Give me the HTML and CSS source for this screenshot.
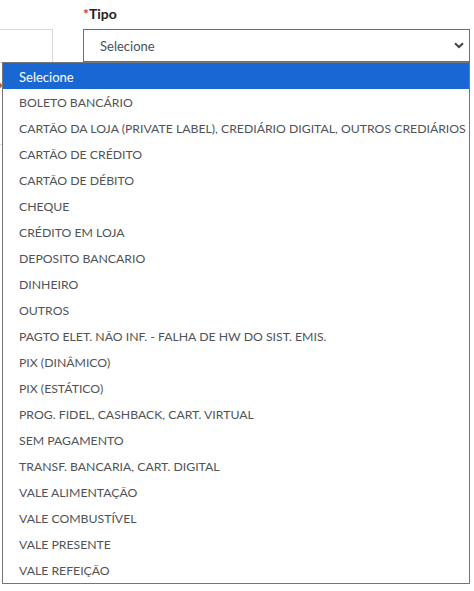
FILE: index.html
```html
<!DOCTYPE html>
<html>
<head>
  <meta http-equiv="Content-type" content="text/html; charset=utf-8">
  <title>Tipo</title>
<link rel="stylesheet" href="styles.css">
</head>

<body>
  <div class="form-row">
    <div class="field field-left">
      <div class="input-box"></div>
    </div>
    <div class="field field-tipo">
      <label class="label"><span class="req">*</span>Tipo</label>
      <div class="select-box">
        <span>Selecione</span>
        <svg class="chevron" width="10" height="7" viewBox="0 0 10 7">
          <path d="M1 1.2 L5 5 L9 1.2" fill="none" stroke="#444" stroke-width="2"/>
        </svg>
      </div>
    </div>
  </div>
  <div class="side-mark"></div>
  <div class="side-line"></div>

  <ul class="listbox">
    <li class="selected">Selecione</li>
    <li>BOLETO BANCÁRIO</li>
    <li>CARTÃO DA LOJA (PRIVATE LABEL), CREDIÁRIO DIGITAL, OUTROS CREDIÁRIOS</li>
    <li>CARTÃO DE CRÉDITO</li>
    <li>CARTÃO DE DÉBITO</li>
    <li>CHEQUE</li>
    <li>CRÉDITO EM LOJA</li>
    <li>DEPOSITO BANCARIO</li>
    <li>DINHEIRO</li>
    <li>OUTROS</li>
    <li>PAGTO ELET. NÃO INF. - FALHA DE HW DO SIST. EMIS.</li>
    <li>PIX (DINÂMICO)</li>
    <li>PIX (ESTÁTICO)</li>
    <li>PROG. FIDEL, CASHBACK, CART. VIRTUAL</li>
    <li>SEM PAGAMENTO</li>
    <li>TRANSF. BANCARIA, CART. DIGITAL</li>
    <li>VALE ALIMENTAÇÃO</li>
    <li>VALE COMBUSTÍVEL</li>
    <li>VALE PRESENTE</li>
    <li>VALE REFEIÇÃO</li>
  </ul>
</body>
</html>
```

FILE: styles.css
```css
body {
  margin: 0;
  background: #fff;
  font-family: Lato, "Liberation Sans", sans-serif;
  color: #495057;
  position: relative;
  height: 591px;
  overflow: hidden;
}

.form-row {
  display: flex;
  gap: 30px;
  padding-top: 6px;
}

.field-left {
  width: 53px;
  padding-top: 23px;
}

.input-box {
  height: 32px;
  border: 1px solid #d6d9dc;
  border-left: none;
}

.field-tipo {
  width: 387px;
}

.label {
  display: block;
  height: 23px;
  font-size: 14px;
  font-weight: bold;
  color: #222;
  line-height: 16px;
}

.req {
  color: #d9342b;
}

.select-box {
  height: 31px;
  border: 1px solid #3d7ea6;
  display: flex;
  align-items: center;
  justify-content: space-between;
  padding: 0 5px 0 16px;
  font-size: 13px;
}

.side-mark {
  position: absolute;
  left: -3px;
  top: 83px;
  width: 5px;
  height: 5px;
  border-radius: 50%;
  background: #b5653a;
}

.side-line {
  position: absolute;
  left: 0;
  top: 144px;
  width: 2px;
  height: 1px;
  background: #ddd;
}

/* open dropdown of the select */
.listbox {
  position: absolute;
  left: 2px;
  top: 62px;
  width: 466px;
  margin: 0;
  padding: 0;
  list-style: none;
  border: 1px solid #767676;
  background: #fff;
  font-size: 12.25px;
}

.listbox li {
  height: 26px;
  line-height: 28px;
  padding-left: 16px;
  white-space: nowrap;
  color: #4f5358;
}

.listbox li.selected {
  background: #1967d2;
  color: #fff;
  font-size: 13px;
}
```
